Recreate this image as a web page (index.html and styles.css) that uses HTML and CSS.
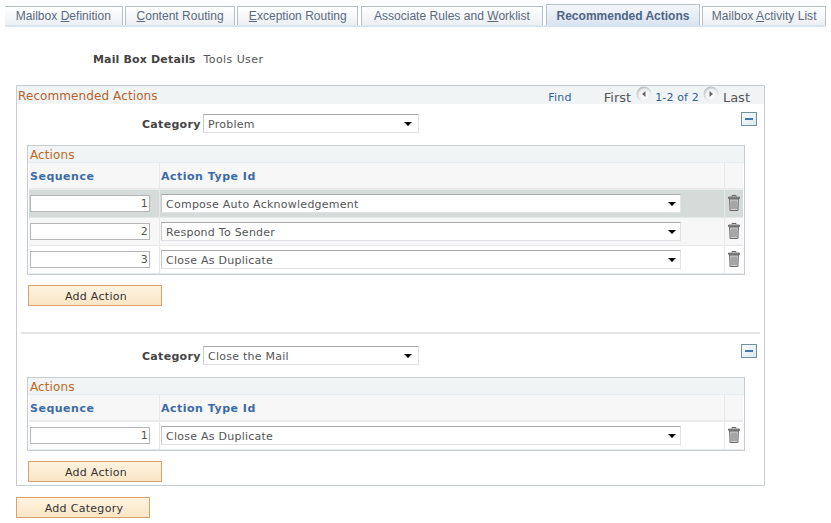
FILE: index.html
```html
<!DOCTYPE html>
<html lang="en">
<head>
<meta charset="utf-8">
<title>Recommended Actions</title>
<link rel="stylesheet" href="styles.css">
</head>
<body>
<svg width="0" height="0" class="defs">
  <defs>
    <symbol id="trash" viewBox="0 0 12 16">
      <path d="M4 1.5V.5h4v1" stroke="#666" fill="none"/>
      <path d="M.5 2h11v1.6H.5z" fill="#8f8f8f" stroke="#666" stroke-width=".8"/>
      <path d="M1.6 4h8.8l-.5 11.5H2.1z" fill="#d2d2d2" stroke="#666"/>
      <path d="M4 5.500v8.500M6 5.500v8.500M8 5.500v8.500" stroke="#7a7a7a" fill="none"/>
    </symbol>
    <radialGradient id="orb" cx="55%" cy="60%" r="60%">
      <stop offset="0" stop-color="#fff"/>
      <stop offset=".65" stop-color="#eef0f0"/>
      <stop offset="1" stop-color="#b4babd"/>
    </radialGradient>
  </defs>
</svg>
<nav class="tabs">
  <a class="tab t1"><span>Mailbox <u>D</u>efinition</span></a>
  <a class="tab t2"><span><u>C</u>ontent Routing</span></a>
  <a class="tab t3"><span><u>E</u>xception Routing</span></a>
  <a class="tab t4"><span>Associate Rules and <u>W</u>orklist</span></a>
  <a class="tab t5 active"><span>Recommended Actions</span></a>
  <a class="tab t6"><span>Mailbox <u>A</u>ctivity List</span></a>
</nav>
<div class="details"><b class="details-label">Mail Box Details</b><span class="details-value">Tools User</span></div>
<section class="box">
  <header class="box-head">
    <h2 class="title">Recommended Actions</h2>
    <div class="pager">
      <a class="find">Find</a>
      <span class="first">First</span>
      <svg class="orb orb-prev" viewBox="0 0 16 16"><circle cx="8" cy="8" r="7.5" fill="url(#orb)"/><path d="M9.500 5v6L6 8z" fill="#666"/></svg>
      <span class="count">1-2 of 2</span>
      <svg class="orb orb-next" viewBox="0 0 16 16"><circle cx="8" cy="8" r="7.5" fill="url(#orb)"/><path d="M6.500 5v6L10 8z" fill="#666"/></svg>
      <span class="last">Last</span>
    </div>
  </header>

  <div class="cat-row first-cat">
    <b class="cat-label">Category</b>
    <div class="select cat-select"><span>Problem</span><i class="arrow"></i></div>
    <div class="minus"><i></i></div>
  </div>
  <div class="grid">
    <div class="grid-title">Actions</div>
    <div class="cell head c1">Sequence</div><div class="cell head c2">Action Type Id</div><div class="cell head c3"></div>
    <div class="cell sel c1"><div class="seq">1</div></div>
    <div class="cell sel c2"><div class="select act"><span>Compose Auto Acknowledgement</span><i class="arrow"></i></div></div>
    <div class="cell sel c3"><svg class="trash"><use href="#trash"/></svg></div>
    <div class="cell alt c1"><div class="seq">2</div></div>
    <div class="cell alt c2"><div class="select act"><span>Respond To Sender</span><i class="arrow"></i></div></div>
    <div class="cell alt c3"><svg class="trash"><use href="#trash"/></svg></div>
    <div class="cell c1"><div class="seq">3</div></div>
    <div class="cell c2"><div class="select act"><span>Close As Duplicate</span><i class="arrow"></i></div></div>
    <div class="cell c3"><svg class="trash"><use href="#trash"/></svg></div>
  </div>
  <button class="btn add-action">Add Action</button>
  <hr class="divider">

  <div class="cat-row second-cat">
    <b class="cat-label">Category</b>
    <div class="select cat-select"><span>Close the Mail</span><i class="arrow"></i></div>
    <div class="minus"><i></i></div>
  </div>
  <div class="grid">
    <div class="grid-title">Actions</div>
    <div class="cell head c1">Sequence</div><div class="cell head c2">Action Type Id</div><div class="cell head c3"></div>
    <div class="cell c1"><div class="seq">1</div></div>
    <div class="cell c2"><div class="select act"><span>Close As Duplicate</span><i class="arrow"></i></div></div>
    <div class="cell c3"><svg class="trash"><use href="#trash"/></svg></div>
  </div>
  <button class="btn add-action">Add Action</button>
</section>
<button class="btn add-category">Add Category</button>
</body>
</html>
```
FILE: styles.css
```css
* { box-sizing: border-box; }
html, body { margin: 0; padding: 0; }
body {
  width: 831px;
  height: 523px;
  overflow: hidden;
  background: #fff;
  font: 11px "DejaVu Sans", sans-serif;
  letter-spacing: .25px;
  color: #4a4a4a;
}
b { letter-spacing: .3px; }
.defs { display: block; height: 0; }

.tabs {
  display: flex;
  align-items: flex-end;
  height: 27px;
  margin: 0 5px;
  padding-top: 4px;
  border-bottom: 2px solid #d9e4f1;
  gap: 2px;
}
.tab {
  display: flex;
  align-items: center;
  justify-content: center;
  height: 19px;
  padding-bottom: 1px;
  font: 12px "Liberation Sans", sans-serif;
  letter-spacing: .03px;
  color: #5a6a80;
  background: linear-gradient(#fff, #eceff3);
  border: 1px solid #b4bfce;
  border-bottom: 0;
}
.tab u { text-decoration: underline; }
.t1 { width: 118px; border-left: 0; }
.t2 { width: 111px; }
.t3 { width: 121px; }
.t4 { width: 182px; margin-left: 1px; }
.t5 { width: 155px; margin-left: 1px; }
.t6 { width: 124px; }
.active {
  height: 21px;
  padding: 1px 0 0;
  font-weight: bold;
  letter-spacing: 0;
  color: #4f6584;
  background: linear-gradient(#f4f7fb, #d9e4f1);
}

.details {
  display: flex;
  height: 17px;
  margin-top: 24px;
  padding-left: 93px;
  align-items: center;
  gap: 8px;
  color: #555;
}
.details-label { color: #444; letter-spacing: .16px; }
.details-value { letter-spacing: .42px; }

.box {
  width: 749px;
  height: 401px;
  margin: 17px 0 0 16px;
  border: 1px solid #c6ccd5;
}
.box-head {
  display: flex;
  justify-content: space-between;
  height: 18px;
  background: #f1f4f5;
}
.title {
  margin: 0 0 0 1px;
  font: 12px/20px "DejaVu Sans", sans-serif;
  letter-spacing: .1px;
  color: #b5622a;
}
.pager {
  display: flex;
  align-items: center;
  padding-right: 14px;
  height: 18px;
  color: #555;
}
.find { color: #2f5f96; margin-right: 32px; position: relative; top: 2px; }
.first, .last { font-size: 13px; letter-spacing: 0; position: relative; top: 2px; }
.count { color: #2f5f96; position: relative; top: 2px; margin-left: 3px; letter-spacing: .15px; }
.orb { width: 16px; height: 16px; position: relative; top: -1px; }
.orb-prev { margin-left: 5px; }
.orb-next { margin-left: 4px; }
.last { margin-left: 4px; }

.cat-row {
  display: flex;
  align-items: flex-start;
  height: 20px;
  padding-left: 125px;
}
.first-cat { margin-top: 10px; }
.second-cat { margin-top: 12px; }
.cat-label {
  width: 58px;
  text-align: right;
  line-height: 22px;
  color: #444;
}
.select {
  display: flex;
  align-items: center;
  justify-content: space-between;
  background: #fff;
  border: 1px solid #dfe3e8;
  border-top: 1px solid #a9a9a9;
  border-left: 1px solid #c9c9c9;
  color: #555;
}
.cat-select {
  width: 216px;
  height: 19px;
  margin-left: 3px;
  padding: 1px 6px 0 4px;
}
.arrow {
  width: 0;
  height: 0;
  border-left: 4px solid transparent;
  border-right: 4px solid transparent;
  border-top: 4px solid #000;
}
.minus {
  width: 16px;
  height: 14px;
  margin: -2px 0 0 322px;
  border: 1px solid #6f929f;
  background: linear-gradient(135deg, #fff, #dbe6ea);
  display: flex;
  align-items: center;
  justify-content: center;
}
.minus i { width: 8px; height: 2px; background: #3f78bf; }

.grid {
  display: grid;
  grid-template-columns: 131px 565px 18px;
  grid-template-rows: 17px 27px;
  grid-auto-rows: 28px;
  width: 718px;
  margin: 11px 0 0 10px;
  border: 1px solid #c6ccd5;
  padding: 0 1px;
  background: #fff;
}
.grid-title {
  grid-column: 1 / -1;
  margin: 0 -1px;
  padding: 1px 0 0 2px;
  background: #f1f4f5;
  font: 12px/16px "DejaVu Sans", sans-serif;
  letter-spacing: .1px;
  color: #c0691d;
  border-bottom: 1px solid #e9ebec;
}
.cell {
  display: flex;
  align-items: center;
  padding-left: 1px;
  border-bottom: 1px solid #e8e8e8;
}
.c1, .c2 { border-right: 1px solid #e8e8e8; }
.c3 { padding-left: 3px; }
.head {
  padding-top: 1px;
  background: #f7f7f7;
  font-weight: bold;
  letter-spacing: .5px;
  color: #3b6ca6;
  border-bottom: 2px solid #eaeaea;
}
.sel { background: #d4dbd9; }
.alt { background: #f7f7f7; }
.seq {
  width: 120px;
  height: 17px;
  border: 1px solid #b5b5b5;
  background: #fff;
  text-align: right;
  line-height: 16px;
  padding-right: 1px;
  color: #555;
}
.act {
  width: 520px;
  height: 19px;
  padding: 1px 4px 0 4px;
}
.trash { width: 12px; height: 16px; margin-top: -2px; }

.btn {
  display: block;
  width: 134px;
  height: 21px;
  padding: 1px 0 0 2px;
  border: 1px solid #dba36b;
  background: linear-gradient(#fdf3e0, #fbe6c6);
  font: 11px "DejaVu Sans", sans-serif;
  letter-spacing: .3px;
  color: #333;
}
.add-action { margin: 10px 0 0 11px; }
.divider {
  height: 2px;
  margin: 26px 4px 0 4px;
  border: 0;
  background: #e4e4e4;
}
.add-category { margin: 11px 0 0 16px; }
```
